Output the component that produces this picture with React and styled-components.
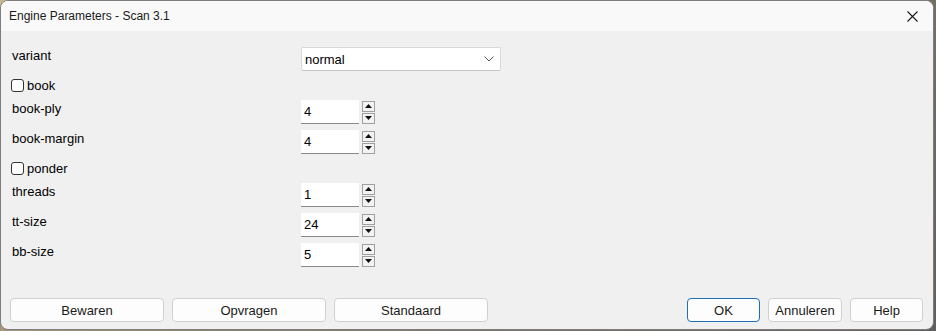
import styled, { createGlobalStyle } from "styled-components";

const GlobalStyle = createGlobalStyle`
  html, body {
    margin: 0;
    padding: 0;
    width: 936px;
    height: 331px;
    overflow: hidden;
    background: linear-gradient(135deg, #c9b592 0%, #8c7f6c 45%, #5f5f5f 100%);
  }
  * {
    box-sizing: border-box;
  }
`;

const fields = [
  { type: "select", label: "variant", value: "normal" },
  { type: "check", label: "book" },
  { type: "spin", label: "book-ply", value: "4" },
  { type: "spin", label: "book-margin", value: "4" },
  { type: "check", label: "ponder" },
  { type: "spin", label: "threads", value: "1" },
  { type: "spin", label: "tt-size", value: "24" },
  { type: "spin", label: "bb-size", value: "5" },
];

function SpinBox({ value }) {
  return (
    <SpinWrap>
      <NumInput>{value}</NumInput>
      <Arrows>
        <ArrowBtn>
          <svg width="7" height="4" viewBox="0 0 7 4">
            <path d="M0 4 L3.5 0 L7 4 Z" fill="#111" />
          </svg>
        </ArrowBtn>
        <ArrowBtn>
          <svg width="7" height="4" viewBox="0 0 7 4">
            <path d="M0 0 L3.5 4 L7 0 Z" fill="#111" />
          </svg>
        </ArrowBtn>
      </Arrows>
    </SpinWrap>
  );
}

function Field({ field }) {
  if (field.type === "check") {
    return (
      <CheckRow>
        <Box />
        <span>{field.label}</span>
      </CheckRow>
    );
  }
  return (
    <Row>
      <Label>{field.label}</Label>
      {field.type === "select" ? (
        <Select>
          <span>{field.value}</span>
          <svg width="10" height="6" viewBox="0 0 10 6">
            <path d="M0.5 0.5 L5 5 L9.5 0.5" fill="none" stroke="#555" strokeWidth="1" />
          </svg>
        </Select>
      ) : (
        <SpinBox value={field.value} />
      )}
    </Row>
  );
}

export default function App() {
  return (
    <>
      <GlobalStyle />
      <Window>
        <TitleBar>
          <Title>Engine Parameters - Scan 3.1</Title>
          <Close>
            <svg width="11" height="11" viewBox="0 0 11 11">
              <path d="M0.5 0.5 L10.5 10.5 M10.5 0.5 L0.5 10.5" stroke="#1a1a1a" strokeWidth="1.1" />
            </svg>
          </Close>
        </TitleBar>
        <Body>
          <Form>
            {fields.map((f) => (
              <Field key={f.label} field={f} />
            ))}
          </Form>
          <Footer>
            <Group>
              <Button $w={154}>Bewaren</Button>
              <Button $w={154}>Opvragen</Button>
              <Button $w={154}>Standaard</Button>
            </Group>
            <Group>
              <Button $w={73} $primary>OK</Button>
              <Button $w={74}>Annuleren</Button>
              <Button $w={73}>Help</Button>
            </Group>
          </Footer>
        </Body>
      </Window>
    </>
  );
}

const Window = styled.div`
  width: 934px;
  height: 330px;
  display: flex;
  flex-direction: column;
  background: #f0f0f0;
  border: 1px solid #7d7d7d;
  border-radius: 8px;
  overflow: hidden;
  font-family: "Liberation Sans", Arial, sans-serif;
  color: #000;
`;

const TitleBar = styled.div`
  height: 30px;
  flex-shrink: 0;
  display: flex;
  align-items: center;
  justify-content: space-between;
  background: #f9f9f9;
  padding: 0 0 0 8px;
`;

const Title = styled.div`
  font-size: 12px;
  color: #1a1a1a;
`;

const Close = styled.div`
  width: 42px;
  height: 30px;
  display: flex;
  align-items: center;
  justify-content: center;
`;

const Body = styled.div`
  flex: 1;
  display: flex;
  flex-direction: column;
  padding: 16px 10px 7px 9px;
`;

const Form = styled.div`
  display: flex;
  flex-direction: column;
  gap: 6px;
  padding-left: 1px;
`;

const Row = styled.div`
  display: grid;
  grid-template-columns: 290px auto;
  align-items: start;
  height: 24px;
`;

const Label = styled.div`
  font-size: 13px;
  line-height: 15px;
  padding-top: 1px;
  padding-left: 1px;
`;

const CheckRow = styled.div`
  display: flex;
  align-items: center;
  gap: 3px;
  height: 17px;
  font-size: 13px;
`;

const Box = styled.div`
  width: 13px;
  height: 13px;
  border: 1px solid #333;
  border-radius: 3px;
  background: #fff;
`;

const Select = styled.div`
  width: 200px;
  height: 24px;
  display: flex;
  align-items: center;
  justify-content: space-between;
  padding: 0 6px 0 3px;
  background: #fff;
  border: 1px solid #d9d9d9;
  border-bottom-color: #c4c4c4;
  border-radius: 2px;
  font-size: 13px;
`;

const SpinWrap = styled.div`
  display: flex;
  align-items: center;
  gap: 3px;
`;

const NumInput = styled.div`
  width: 58px;
  height: 24px;
  display: flex;
  align-items: center;
  padding-left: 3px;
  background: #fff;
  border-bottom: 1px solid #8a8a8a;
  font-size: 13px;
`;

const Arrows = styled.div`
  display: flex;
  flex-direction: column;
  gap: 1px;
`;

const ArrowBtn = styled.div`
  width: 13px;
  height: 11px;
  display: flex;
  align-items: center;
  justify-content: center;
  background: #f3f3f3;
  border: 1px solid #a0a0a0;
`;

const Footer = styled.div`
  margin-top: auto;
  display: flex;
  justify-content: space-between;
`;

const Group = styled.div`
  display: flex;
  gap: 8px;
`;

const Button = styled.div`
  width: ${(p) => p.$w}px;
  height: 24px;
  display: flex;
  align-items: center;
  justify-content: center;
  background: #fdfdfd;
  border: 1px solid ${(p) => (p.$primary ? "#1f6fb8" : "#d0d0d0")};
  border-radius: 4px;
  font-size: 13px;
  color: #1a1a1a;
`;
